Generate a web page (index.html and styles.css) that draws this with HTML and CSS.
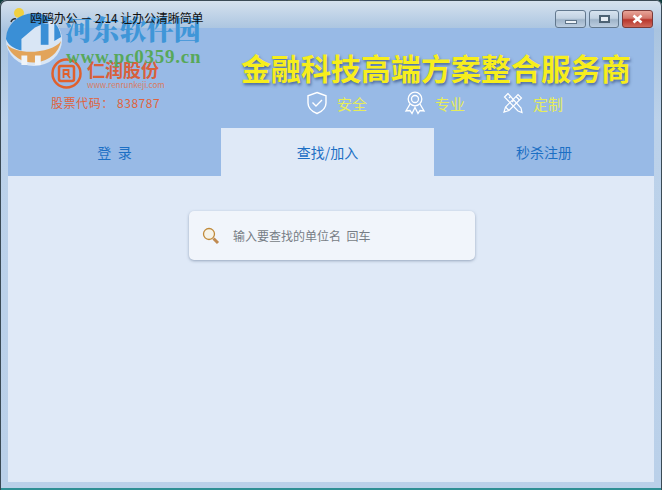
FILE: index.html
```html
<!DOCTYPE html>
<html lang="zh-CN">
<head>
<meta charset="utf-8">
<title>鸥鸥办公</title>
<link rel="stylesheet" href="styles.css">
</head>
<body>
<div class="window">
  <div class="titlebar">
    <svg class="app-icon" width="18" height="16" viewBox="0 0 18 16"><circle cx="10" cy="6" r="5" fill="#f0d040"/><path d="M2 15a4 4 0 0 1 5-3" stroke="#333" stroke-width="1.5" fill="none"/></svg>
    <span class="title-text">鸥鸥办公 － 2.14 让办公清晰简单</span>
    <div class="controls">
      <span class="ctl ctl-min"><i></i></span>
      <span class="ctl ctl-max"><i></i></span>
      <span class="ctl ctl-close">
        <svg width="13" height="10" viewBox="0 0 13 10"><path d="M2.5 1.5l8 7M10.5 1.5l-8 7" stroke="#fff" stroke-width="2.6"/></svg>
      </span>
    </div>
  </div>
  <div class="client">
    <header class="banner">
      <div class="brand">
        <div class="brand-top">
          <svg class="brand-logo" width="31" height="31" viewBox="0 0 31 31"><circle cx="15.500" cy="15.500" r="14" fill="none" stroke="#e0602c" stroke-width="2.500"/><rect x="8" y="8" width="15" height="15" rx="2" fill="none" stroke="#e0602c" stroke-width="2.500"/><path d="M12.500 11v9M12.500 12h5v4h-5M16 16l3 4" fill="none" stroke="#e0602c" stroke-width="1.800"/></svg>
          <div class="brand-copy">
            <div class="brand-name">仁润股份</div>
            <div class="brand-url">www.renrunkeji.com</div>
          </div>
        </div>
        <div class="stock">股票代码： 838787</div>
      </div>
      <div class="slogan">
        <h1 class="headline">金融科技高端方案整合服务商</h1>
        <ul class="features">
          <li class="feature">
            <svg width="22" height="24" viewBox="0 0 22 24" fill="none" stroke="#fff" stroke-width="1.400"><path d="M11 1.500l9 3.300v7.200c0 5-4 8.500-9 10.500-5-2-9-5.500-9-10.500V4.800z"/><path d="M6.500 11.500l3.500 3.500 6-6"/></svg>
            <span>安全</span>
          </li>
          <li class="feature">
            <svg width="22" height="24" viewBox="0 0 22 24" fill="none" stroke="#fff" stroke-width="1.300"><circle cx="11" cy="8" r="6.800"/><circle cx="11" cy="8" r="3.500"/><path d="M6 13l-4 7 4-.5 2 3 3-6 3 6 2-3 4 .5-4-7"/></svg>
            <span>专业</span>
          </li>
          <li class="feature">
            <svg width="22" height="24" viewBox="0 0 22 24" fill="none" stroke="#fff" stroke-width="1.200"><path d="M2 21l1.500-5L16 3.500l3.500 3.500L7 19.500z"/><path d="M3.500 16L7 19.500M14 5.500L17.500 9"/><path d="M6 2.500L2.500 6 16 20l4 1.500-1-4.500z"/><path d="M7 7l2-2M10 11l2-2"/></svg>
            <span>定制</span>
          </li>
        </ul>
      </div>
    </header>
    <nav class="tabs">
      <div class="tab">登&nbsp;&nbsp;录</div>
      <div class="tab tab-active">查找/加入</div>
      <div class="tab">秒杀注册</div>
    </nav>
    <main class="content">
      <div class="search">
        <svg class="search-icon" width="18" height="18" viewBox="0 0 18 18"><circle cx="7" cy="7" r="5.500" fill="#f6f3e8" stroke="#c08a3a" stroke-width="1.300"/><path d="M11.500 11.500l4.500 4.500" stroke="#c08a50" stroke-width="3"/></svg>
        <span class="search-text">输入要查找的单位名&nbsp;&nbsp;回车</span>
      </div>
    </main>
  </div>
  <div class="watermark">
    <svg class="wm-logo" width="60" height="58" viewBox="0 0 62 60"><ellipse cx="31" cy="31" rx="29" ry="27" fill="#d9e6f5"/><path d="M3 36a29 27 0 0 0 56-4c-8 12-44 16-56 4z" fill="#e2a45a"/><path d="M18 47h6v10h-6zM32 47h6v10h-6z" fill="#f0f4f8"/><path d="M2 30A29 27 0 0 1 50 10L32 18 18 30v12C10 40 4 36 2 30z" fill="#3a8fd6"/><path d="M38 14h8v22h-8z" fill="#3a8fd6"/><path d="M52 13a29 27 0 0 1 7 15l-7 4z" fill="#3a8fd6"/></svg>
    <div class="wm-name">河东软件园</div>
    <div class="wm-url">www.pc0359.cn</div>
  </div>
</div>
</body>
</html>
```
FILE: styles.css
```css
* { box-sizing: border-box; }
html, body { margin: 0; padding: 0; }
body { width: 662px; height: 490px; overflow: hidden; background: #0c3a3a; font-family: "Noto Sans CJK SC", "Liberation Sans", sans-serif; }
.window {
  position: relative;
  width: 662px;
  height: 490px;
  display: flex;
  flex-direction: column;
  padding: 0 8px 8px;
  border-radius: 6px 6px 0 0;
  box-shadow: inset 1px 1px 0 #3a4a55, inset -1px 0 0 #3a4a55, inset 0 -2px 0 #2f8f94;
  background: linear-gradient(#d6e2ee 0, #a9c4e0 30px, #bcd2ea 120px, #bad0e9 100%);
}
.titlebar { height: 28px; flex: none; display: flex; align-items: center; margin: 0 -8px; padding: 0 9px 0 9px; }
.app-icon { flex: none; margin-top: 2px; }
.title-text { margin-left: 3px; margin-top: 8px; font-size: 12px; line-height: 20px; letter-spacing: -0.1px; color: #111; white-space: nowrap; position: relative; z-index: 2; }
.controls { margin-left: auto; display: flex; gap: 3px; align-self: flex-start; margin-top: 10px; }
.ctl { display: flex; align-items: center; justify-content: center; height: 18px; border: 1px solid #62788e; border-radius: 3px; background: linear-gradient(#d7e3ef 0, #c2d2e2 45%, #9fb4c9 55%, #bccde0 100%); }
.ctl-min { width: 31px; }
.ctl-min i { display: block; width: 12px; height: 4px; background: #eef3f8; border: 1px solid #5f7488; margin-top: 5px; }
.ctl-max { width: 30px; }
.ctl-max i { display: block; width: 11px; height: 8px; background: #e6edf4; border: 2px solid #4d6274; }
.ctl-close { width: 31px; border-color: #7a3a38; background: linear-gradient(#e8a498 0, #d2756a 45%, #b8362c 55%, #cf6a5c 100%); }
.client { flex: 1; display: flex; flex-direction: column; background: #dfe9f7; min-height: 0; }
.banner { height: 100px; flex: none; display: flex; background: #98bae6; }
.brand { width: 213px; flex: none; padding: 30px 0 0 43px; color: #e0633c; }
.brand-top { display: flex; gap: 5px; height: 33px; }
.brand-logo { flex: none; }
.brand-name { font-size: 18px; line-height: 20px; font-weight: 700; color: #d9603c; margin-top: 1px; white-space: nowrap; }
.brand-url { font-size: 8px; line-height: 10px; margin-top: 1px; color: #d97a60; white-space: nowrap; }
.stock { margin-top: 4px; font-size: 12px; line-height: 16px; letter-spacing: 0.55px; white-space: nowrap; }
.slogan { flex: 1; min-width: 0; }
.headline { margin: 20px 0 0 20px; font-size: 30px; line-height: 38px; font-weight: 700; color: #f7ee1c; text-shadow: 1px 2px 3px rgba(40, 70, 120, .7); white-space: nowrap; }
.features { list-style: none; margin: 4px 0 0 85px; padding: 0; display: flex; gap: 37px; }
.feature { display: flex; align-items: center; gap: 9px; height: 26px; font-size: 15px; color: #e6ec5a; }
.feature svg { flex: none; }
.tabs { height: 48px; flex: none; display: flex; background: #98bae6; }
.tab { flex: 1; display: flex; align-items: center; justify-content: center; padding-bottom: 1px; font-size: 14px; color: #1c6fc4; }
.tab:nth-child(2) { flex: none; width: 213px; }
.tab:nth-child(1) { flex: none; width: 213px; }
.tab-active { background: #dfe9f7; }
.content { flex: 1; min-height: 0; display: flex; align-items: flex-start; padding: 35px 0 0 181px; }
.search { width: 286px; height: 49px; display: flex; align-items: center; padding: 0 13px; background: #f1f5fb; border-radius: 5px; box-shadow: 0 1px 3px rgba(90, 110, 140, .55); }
.search-icon { flex: none; }
.search-text { margin-left: 13px; font-size: 12px; color: #777d85; white-space: nowrap; }
.watermark { position: absolute; left: 0; top: 0; width: 210px; height: 70px; pointer-events: none; }
.wm-logo { position: absolute; left: 4px; top: 10px; }
.wm-name { position: absolute; left: 65px; top: 11px; font-family: "Noto Serif CJK SC", "Noto Sans CJK SC", serif; font-size: 27px; line-height: 36px; font-weight: 900; color: #3f96d8; white-space: nowrap; letter-spacing: 0.2px; }
.wm-url { position: absolute; left: 66px; top: 47px; font-family: "Liberation Serif", serif; font-size: 19px; line-height: 20px; font-weight: 700; color: #57a85a; white-space: nowrap; letter-spacing: 0.75px; }
```
